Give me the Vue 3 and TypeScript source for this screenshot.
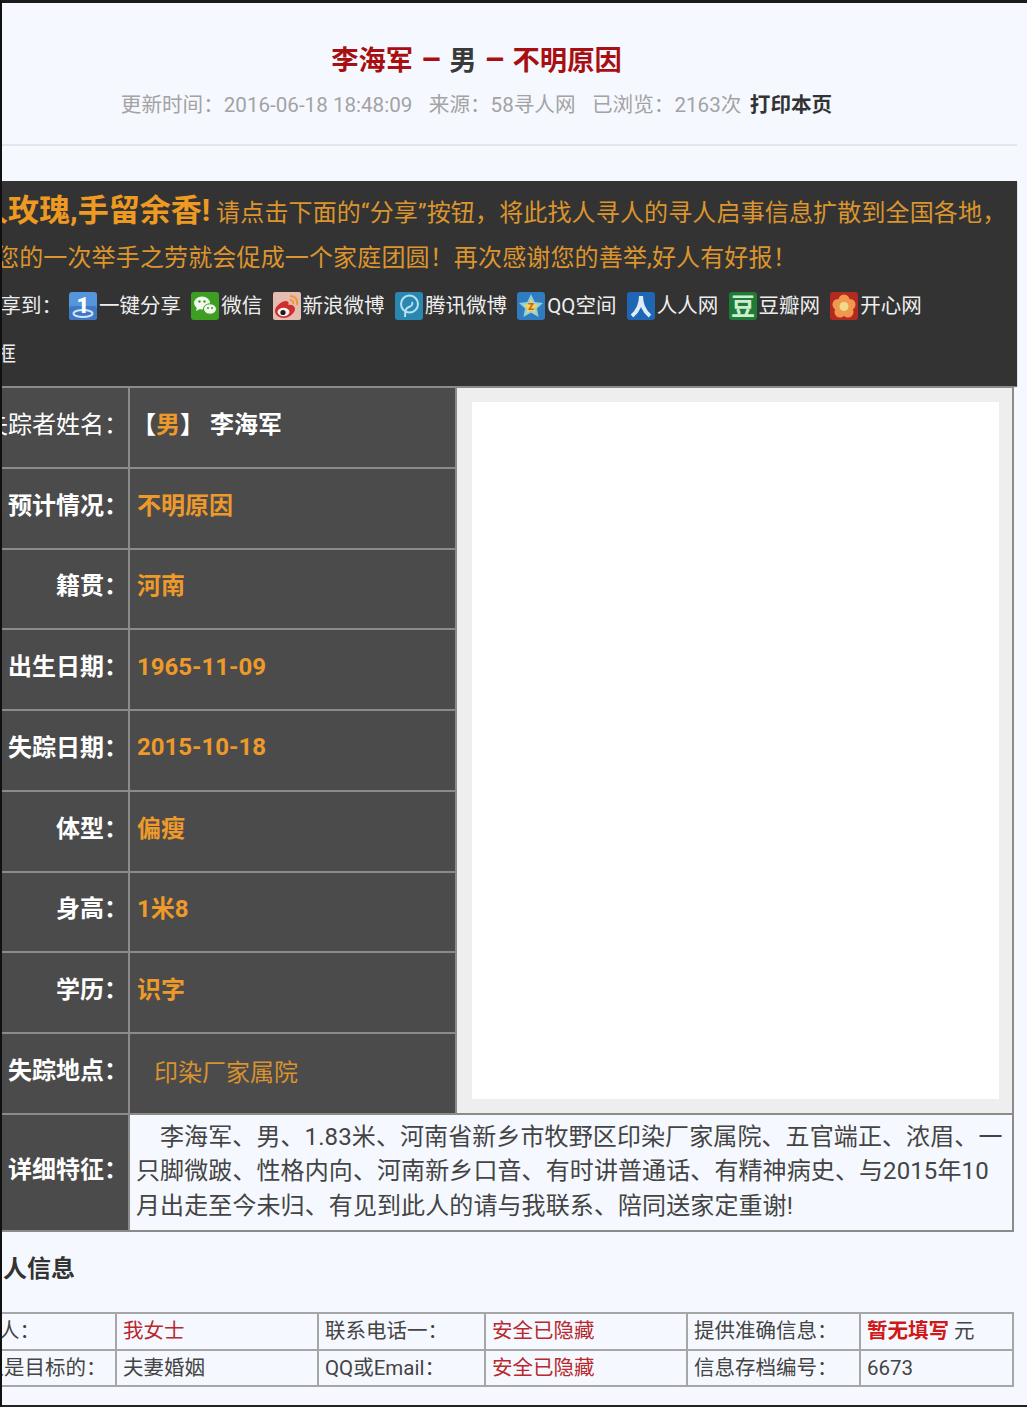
<template>
  <div class="page">
    <header class="head">
      <h1 class="title">李海军<i> – </i><em>男</em><i> – </i>不明原因</h1>
      <p class="meta">
        <span>更新时间：2016-06-18 18:48:09</span>
        <span>来源：58寻人网</span>
        <span>已浏览：2163次</span>
        <b>打印本页</b>
      </p>
    </header>

    <section class="banner">
      <div class="line first"><strong>赠人玫瑰,手留余香!</strong> 请点击下面的“分享”按钮，将此找人寻人的寻人启事信息扩散到全国各地，</div>
      <div class="line second">您的一次举手之劳就会促成一个家庭团圆！再次感谢您的善举,好人有好报！</div>
      <div class="share">
        <span class="share-lead">分享到：</span>
        <span v-for="s in shares" :key="s.kind" class="share-item">
          <svg class="ico" viewBox="0 0 28 28">
            <template v-if="s.kind === 'one'">
              <rect width="28" height="28" rx="3" fill="#5496dc" />
              <rect y="14" width="28" height="14" rx="3" fill="#3f78c4" />
              <ellipse cx="14" cy="21.500" rx="9.500" ry="3.500" fill="none" stroke="#cfe2f7" stroke-width="2" />
              <text x="14" y="21" text-anchor="middle" class="ico-one">1</text>
            </template>
            <template v-else-if="s.kind === 'wx'">
              <rect width="28" height="28" rx="3" fill="#3e9e22" />
              <ellipse cx="11" cy="11" rx="8" ry="6.500" fill="#f2f8ee" />
              <path d="M6 15l-1 4 4-2z" fill="#f2f8ee" />
              <ellipse cx="19" cy="17" rx="6.500" ry="5.200" fill="#f2f8ee" stroke="#3e9e22" />
              <circle cx="8.500" cy="9.500" r="1.200" fill="#3e9e22" />
              <circle cx="13.500" cy="9.500" r="1.200" fill="#3e9e22" />
              <circle cx="17" cy="16" r="1" fill="#3e9e22" />
              <circle cx="21" cy="16" r="1" fill="#3e9e22" />
            </template>
            <template v-else-if="s.kind === 'sina'">
              <rect width="28" height="28" rx="2" fill="#e4bcb0" />
              <path d="M2 19c0-5 7-10 11-10 3 0 3 3 2 4 4-1 7 1 7 4 0 4-6 9-11 9-5 0-9-3-9-7z" fill="#cf2f2c" />
              <ellipse cx="10.500" cy="20" rx="6" ry="4.200" fill="#f4eeee" />
              <circle cx="10" cy="20.500" r="2.600" fill="#1c1c1c" />
              <path d="M17 4c5 0 8 3 7 9M17 8c2 0 4 1 3 4" fill="none" stroke="#e89a3a" stroke-width="2" />
            </template>
            <template v-else-if="s.kind === 'qq'">
              <rect width="28" height="28" rx="3" fill="#2a88b0" />
              <circle cx="14.500" cy="12" r="8.500" fill="none" stroke="#b5e2f0" stroke-width="2" />
              <path d="M10 25c0-7 1-9 4-10 3-1 4-3 3-5" fill="none" stroke="#b5e2f0" stroke-width="2" />
            </template>
            <template v-else-if="s.kind === 'qzone'">
              <rect width="28" height="28" rx="3" fill="#2f7cc0" />
              <path d="M14 2l3.800 8 8.200 1-6 5.600 1.600 8.400L14 20.800 6.400 25 8 16.600 2 11l8.200-1z" fill="#8fd0d8" />
              <path d="M14 7l2.300 5 5.200.700-3.800 3.500 1 5.300L14 18.800l-4.700 2.700 1-5.300-3.800-3.500 5.200-.700z" fill="#f3d35a" />
              <text x="14" y="18" text-anchor="middle" class="ico-z">z</text>
            </template>
            <template v-else-if="s.kind === 'renren'">
              <rect width="28" height="28" rx="3" fill="#1f66b5" />
              <path d="M14 4c0 9-3 15-9 20M14 4c0 9 3 15 9 20" fill="none" stroke="#dcedf8" stroke-width="4" />
            </template>
            <template v-else-if="s.kind === 'douban'">
              <rect width="28" height="28" rx="3" fill="#1f7c36" />
              <text x="14" y="23" text-anchor="middle" class="ico-dou">豆</text>
            </template>
            <template v-else>
              <rect width="28" height="28" rx="3" fill="#b52a20" />
              <circle cx="14" cy="8" r="5.500" fill="#f0994e" />
              <circle cx="20" cy="12.500" r="5.500" fill="#f0994e" />
              <circle cx="18" cy="20" r="5.500" fill="#f0994e" />
              <circle cx="10" cy="20" r="5.500" fill="#f0994e" />
              <circle cx="8" cy="12.500" r="5.500" fill="#f0994e" />
              <circle cx="14" cy="14.500" r="4.500" fill="#f1d98c" />
            </template>
          </svg><span class="share-text">{{ s.label }}</span>
        </span>
      </div>
      <div class="line fourth">框</div>
    </section>

    <table class="info">
      <colgroup>
        <col class="c-label" />
        <col class="c-value" />
        <col />
      </colgroup>
      <tbody>
        <tr v-for="(r, i) in rows" :key="r.label" class="row">
          <th :class="{ light: i === 0 }">{{ r.label }}</th>
          <td v-if="i === 0" class="val name">【<span>男</span>】 李海军</td>
          <td v-else class="val" :class="{ place: r.plain, date: r.date }">{{ r.value }}</td>
          <td v-if="i === 0" :rowspan="rows.length" class="photo">
            <div class="photo-box"></div>
          </td>
        </tr>
        <tr>
          <th class="detail-th">详细特征：</th>
          <td colspan="2" class="detail">李海军、男、1.83米、河南省新乡市牧野区印染厂家属院、五官端正、浓眉、一只脚微跛、性格内向、河南新乡口音、有时讲普通话、有精神病史、与2015年10月出走至今未归、有见到此人的请与我联系、陪同送家定重谢!</td>
        </tr>
      </tbody>
    </table>

    <h2 class="sub">联系人信息</h2>

    <table class="contact">
      <colgroup>
        <col class="k1" /><col class="v1" /><col class="k2" /><col class="v2" /><col class="k3" /><col />
      </colgroup>
      <tbody>
        <tr>
          <td class="who">联系人：</td>
          <td class="red">我女士</td>
          <td>联系电话一：</td>
          <td class="red">安全已隐藏</td>
          <td>提供准确信息：</td>
          <td><b class="red">暂无填写</b> 元</td>
        </tr>
        <tr>
          <td>寻人是目标的：</td>
          <td>夫妻婚姻</td>
          <td>QQ或Email：</td>
          <td class="red">安全已隐藏</td>
          <td>信息存档编号：</td>
          <td>6673</td>
        </tr>
      </tbody>
    </table>
  </div>
</template>

<script setup lang="ts">
interface Share {
  kind: string;
  label: string;
}

interface Row {
  label: string;
  value: string;
  plain?: boolean;
  date?: boolean;
}

const shares: Share[] = [
  { kind: "one", label: "一键分享" },
  { kind: "wx", label: "微信" },
  { kind: "sina", label: "新浪微博" },
  { kind: "qq", label: "腾讯微博" },
  { kind: "qzone", label: "QQ空间" },
  { kind: "renren", label: "人人网" },
  { kind: "douban", label: "豆瓣网" },
  { kind: "kaixin", label: "开心网" },
];

const rows: Row[] = [
  { label: "失踪者姓名：", value: "" },
  { label: "预计情况：", value: "不明原因" },
  { label: "籍贯：", value: "河南" },
  { label: "出生日期：", value: "1965-11-09", date: true },
  { label: "失踪日期：", value: "2015-10-18", date: true },
  { label: "体型：", value: "偏瘦" },
  { label: "身高：", value: "1米8" },
  { label: "学历：", value: "识字" },
  { label: "失踪地点：", value: "印染厂家属院", plain: true },
];
</script>

<style>
html,
body {
  margin: 0;
  background: #f5f9ff;
}
</style>

<style scoped>
.page {
  box-sizing: border-box;
  width: 1027px;
  height: 1407px;
  overflow: hidden;
  background: #f5f9ff;
  border-top: 3px solid #1a1a1a;
  border-left: 2px solid #111;
  border-bottom: 2px solid #222;
  font-family: Roboto, "Noto Sans CJK SC", sans-serif;
  color: #444;
}

.head {
  width: 1015px;
  height: 143px;
  box-sizing: border-box;
  padding: 38px 66px 0 0;
  border-bottom: 2px solid #e3e6eb;
  text-align: center;
}

.title {
  margin: 0;
  font-size: 27.300px;
  line-height: 40px;
  font-weight: 700;
  color: #a80f12;
}

.title em {
  font-style: normal;
  color: #3a3a3a;
}

.title i {
  font-style: normal;
  font-size: 32px;
  line-height: 1;
}

.meta {
  margin: 4px 0 0;
  display: flex;
  justify-content: center;
  gap: 16.500px;
  font-size: 20.600px;
  line-height: 40px;
  color: #a3a3a3;
}

.meta b {
  color: #333;
  margin-left: -8px;
}

.banner {
  box-sizing: border-box;
  width: 1015px;
  height: 205px;
  margin-top: 35px;
  background: #333;
  box-shadow: 0 1px 1px #777;
  overflow: hidden;
  color: #dc952e;
  font-size: 24px;
}

.line {
  white-space: nowrap;
  height: 47px;
  line-height: 47px;
  letter-spacing: 0.15px;
}

.first {
  margin-left: -56px;
  margin-top: 6px;
}

.first strong {
  font-size: 31px;
  letter-spacing: 0;
  color: #ee9a22;
}

.second {
  margin-left: -7px;
  padding-top: 1px;
}

.share {
  display: flex;
  align-items: center;
  height: 48px;
  font-size: 20.500px;
  color: #eee;
  white-space: nowrap;
}

.share-lead {
  margin-left: -22px;
  width: 89px;
  margin-top: -4px;
}

.share-item {
  display: inline-flex;
  align-items: center;
  gap: 2px;
  margin-right: 10.300px;
}

.share-text {
  margin-top: -4px;
}

.ico {
  width: 28px;
  height: 28px;
  flex: none;
}

.ico-one {
  font: 900 22px Roboto, sans-serif;
  fill: #fff;
}

.ico-z {
  font: 700 12px Roboto, sans-serif;
  fill: #c8651c;
}

.ico-dou {
  font: 700 24px "Noto Sans CJK SC", sans-serif;
  fill: #cdeed2;
}

.fourth {
  margin-left: -7px;
  padding-top: 1px;
  font-size: 21px;
  color: #eee;
}

.info {
  table-layout: fixed;
  width: 1076px;
  margin-left: -64px;
  border-collapse: collapse;
  border: 2px solid #8b8b8b;
  font-size: 24px;
}

.c-label {
  width: 190px;
}

.c-value {
  width: 327px;
}

.info th,
.info td {
  border: 2px solid #8b8b8b;
  padding: 0;
}

.info th {
  background: #4b4b4b;
  color: #fff;
  font-weight: 700;
  text-align: right;
  padding: 0 0 10px;
  white-space: nowrap;
}

.info th.light {
  font-weight: 400;
}

.row {
  height: 80.700px;
}

.val {
  background: #4b4b4b;
  color: #ee9a2a;
  font-weight: 700;
  padding: 0 0 10px 7px !important;
}

.val.date {
  padding-bottom: 6px !important;
}

.val.name {
  color: #fff;
  padding-left: 2px !important;
}

.val.name span {
  color: #ee9a2a;
}

.val.place {
  font-weight: 400;
  color: #d8922e;
  padding: 0 0 6px 24px !important;
}

.photo {
  background: #eee;
  padding: 14px 14px 14px 15px !important;
  vertical-align: top;
}

.photo-box {
  width: 527px;
  height: 697px;
  background: #fff;
}

.detail {
  height: 113px;
  padding: 0 2px 2px 6px !important;
  line-height: 34.500px;
  text-indent: 24px;
  letter-spacing: 0.1px;
  color: #444;
}

.sub {
  margin: 18px 0 0 -47px;
  height: 42px;
  font-size: 24px;
  line-height: 38px;
  font-weight: 700;
  color: #333;
}

.contact {
  table-layout: fixed;
  width: 1073px;
  margin-left: -61px;
  margin-top: 20px;
  border-collapse: collapse;
  font-size: 20.500px;
  line-height: 24px;
}

.k1 {
  width: 174px;
}

.v1 {
  width: 202px;
}

.k2 {
  width: 167px;
}

.v2 {
  width: 202px;
}

.k3 {
  width: 173px;
}

.contact td {
  height: 34.500px;
  padding: 0 0 0 6px;
  border: 2px solid #a6a6a6;
  white-space: nowrap;
  color: #444;
}

.contact td:first-child {
  padding-left: 20px;
}

.contact td.who {
  padding-left: 15px;
}

.contact .red {
  color: #b8282c;
}

.contact b.red {
  color: #d01818;
}
</style>
